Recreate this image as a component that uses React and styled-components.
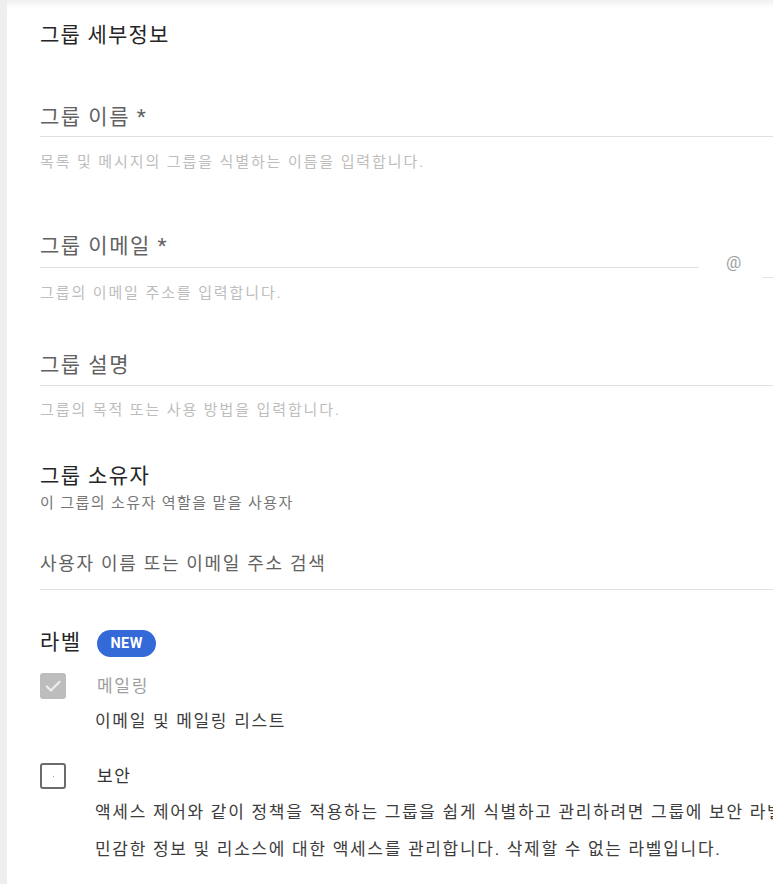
import React from "react";
import styled, { createGlobalStyle } from "styled-components";

const GlobalStyle = createGlobalStyle`
  html, body {
    margin: 0;
    padding: 0;
    background: #ffffff;
    overflow: hidden;
  }
  body {
    font-family: Roboto, "Noto Sans CJK KR", sans-serif;
  }
`;

const Page = styled.div`
  display: flex;
  width: 773px;
  height: 884px;
  overflow: hidden;
`;

const LeftRail = styled.div`
  flex: 0 0 7px;
  background: #eeeeee;
`;

const Card = styled.div`
  flex: 0 0 auto;
  width: 1000px;
  padding: 23px 0 0 33px;
  box-sizing: border-box;
  background: #ffffff;
  box-shadow: inset 0 8px 8px -6px rgba(0, 0, 0, 0.09);
`;

const Title = styled.h2`
  margin: 0;
  font-size: 21px;
  line-height: 24px;
  font-weight: 400;
  letter-spacing: 1.2px;
  color: #262626;
`;

const Field = styled.div`
  margin-top: ${(p) => p.$gap}px;
`;

const FieldRow = styled.div`
  display: flex;
  align-items: flex-start;
`;

const InputLine = styled.div`
  width: ${(p) => p.$width || 740}px;
  padding-bottom: ${(p) => p.$pad || 7}px;
  border-bottom: 1px solid #e0e0e0;
  font-size: ${(p) => p.$size || 21}px;
  letter-spacing: ${(p) => p.$ls || 1.5}px;
  line-height: 24px;
  color: #626262;
`;

const AtSign = styled.span`
  margin: 18px 0 0 27px;
  font-size: 17px;
  line-height: 20px;
  color: #9e9e9e;
`;

const DomainLine = styled.div`
  margin: 43px 0 0 22px;
  width: 200px;
  border-bottom: 1px solid #e0e0e0;
`;

const Helper = styled.div`
  margin-top: ${(p) => p.$gap || 15}px;
  font-size: 15px;
  line-height: 20px;
  letter-spacing: 1.9px;
  color: #bdbdbd;
`;

const SectionHeading = styled.div`
  display: flex;
  align-items: center;
  gap: 16px;
  margin-top: ${(p) => p.$gap}px;
  font-size: 21px;
  line-height: 24px;
  letter-spacing: 1.4px;
  color: #262626;
`;

const SubText = styled.div`
  margin-top: 6px;
  font-size: 15px;
  line-height: 18px;
  letter-spacing: 1.4px;
  color: #757575;
`;

const Badge = styled.span`
  display: inline-flex;
  align-items: center;
  justify-content: center;
  height: 27px;
  padding: 0 13px;
  margin-top: 3px;
  border-radius: 14px;
  background: #3469d8;
  color: #ffffff;
  font-size: 14.5px;
  font-weight: 700;
  letter-spacing: 0.4px;
`;

const CheckRow = styled.div`
  display: flex;
  align-items: center;
  gap: 31px;
  margin-top: ${(p) => p.$gap}px;
`;

const Box = styled.span`
  flex: 0 0 auto;
  display: flex;
  align-items: center;
  justify-content: center;
  width: 26px;
  height: 26px;
  box-sizing: border-box;
  border-radius: 3px;
  background: ${(p) => (p.$checked ? "#bdbdbd" : "#ffffff")};
  border: ${(p) => (p.$checked ? "none" : "2px solid #6b6b6b")};
`;

const Dot = styled.span`
  width: 1px;
  height: 1px;
  background: #9e9e9e;
`;

const CheckLabel = styled.span`
  font-size: 17px;
  line-height: 24px;
  letter-spacing: 1.7px;
  color: ${(p) => (p.$muted ? "#9e9e9e" : "#333333")};
`;

const Description = styled.div`
  margin-left: 55px;
  font-size: 17px;
  line-height: ${(p) => p.$lh || 24}px;
  letter-spacing: 1.7px;
  color: #3c3c3c;
  white-space: nowrap;
  margin-top: ${(p) => p.$gap || 0}px;
`;

const CheckMark = () => (
  <svg width="20" height="20" viewBox="0 0 24 24">
    <path
      d="M4.5 12.5l5 5L20 7"
      fill="none"
      stroke="#eeeeee"
      strokeWidth="2.6"
      strokeLinecap="round"
      strokeLinejoin="round"
    />
  </svg>
);

export default function App() {
  return (
    <>
      <GlobalStyle />
      <Page>
        <LeftRail />
        <Card>
          <Title>그룹 세부정보</Title>

          <Field $gap={58}>
            <InputLine>그룹 이름 *</InputLine>
            <Helper>목록 및 메시지의 그룹을 식별하는 이름을 입력합니다.</Helper>
          </Field>

          <Field $gap={62}>
            <FieldRow>
              <InputLine $width={659} $pad={9}>그룹 이메일 *</InputLine>
              <AtSign>@</AtSign>
              <DomainLine />
            </FieldRow>
            <Helper $gap={5}>그룹의 이메일 주소를 입력합니다.</Helper>
          </Field>

          <Field $gap={50}>
            <InputLine $pad={8}>그룹 설명</InputLine>
            <Helper $gap={14}>그룹의 목적 또는 사용 방법을 입력합니다.</Helper>
          </Field>

          <SectionHeading $gap={44}>그룹 소유자</SectionHeading>
          <SubText>이 그룹의 소유자 역할을 맡을 사용자</SubText>

          <Field $gap={40}>
            <InputLine $size={18} $ls={1.7} $pad={13}>
              사용자 이름 또는 이메일 주소 검색
            </InputLine>
          </Field>

          <SectionHeading $gap={37}>
            라벨
            <Badge>NEW</Badge>
          </SectionHeading>

          <CheckRow $gap={16}>
            <Box $checked>
              <CheckMark />
            </Box>
            <CheckLabel $muted>메일링</CheckLabel>
          </CheckRow>
          <Description $gap={10}>이메일 및 메일링 리스트</Description>

          <CheckRow $gap={30}>
            <Box>
              <Dot />
            </Box>
            <CheckLabel>보안</CheckLabel>
          </CheckRow>
          <Description $lh={37} $gap={5}>
            액세스 제어와 같이 정책을 적용하는 그룹을 쉽게 식별하고 관리하려면 그룹에 보안 라벨을 추가하세요.
          </Description>
          <Description $lh={37}>
            민감한 정보 및 리소스에 대한 액세스를 관리합니다. 삭제할 수 없는 라벨입니다.
          </Description>
        </Card>
      </Page>
    </>
  );
}
